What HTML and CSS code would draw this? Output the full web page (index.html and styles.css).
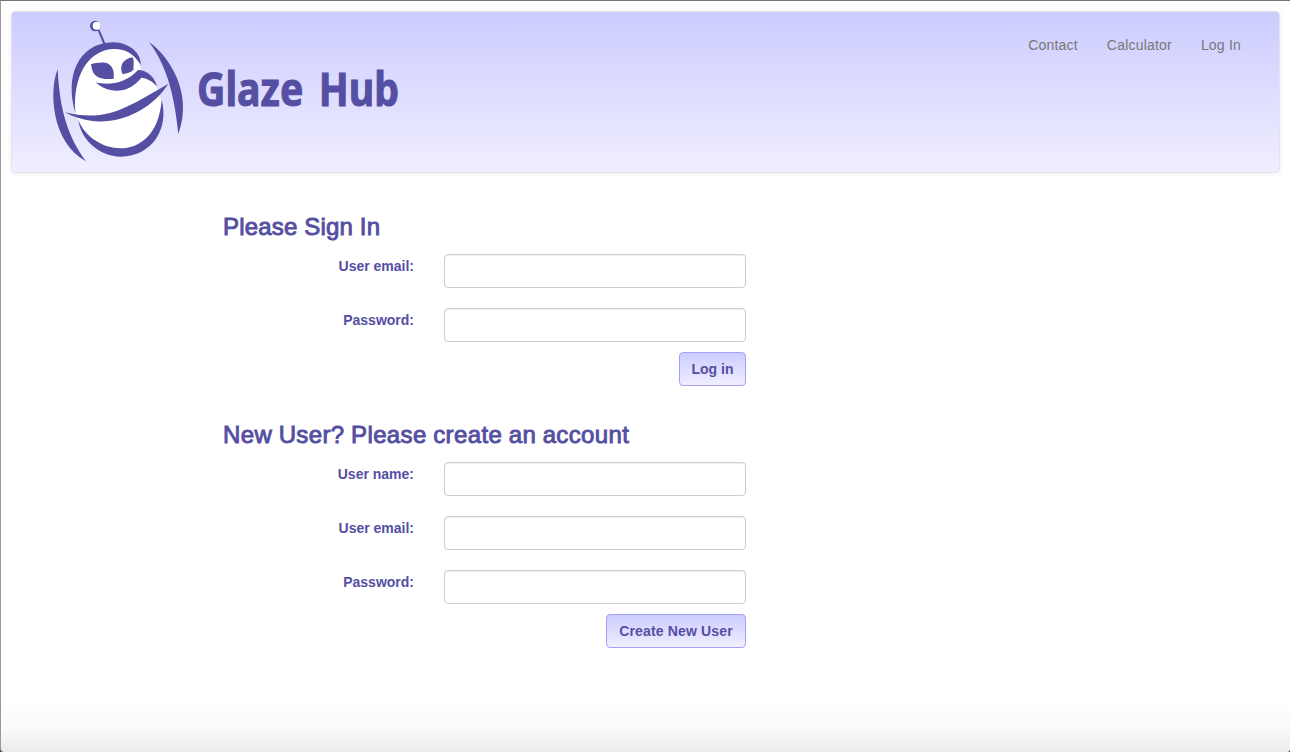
FILE: index.html
```html
<!DOCTYPE html>
<html lang="en">
<head>
<meta charset="utf-8">
<title>Glaze Hub</title>
<link rel="stylesheet" href="styles.css">
</head>
<body>
<div class="page">
  <header class="navbar">
    <a class="brand">
      <svg class="logo" viewBox="0 0 480 480" aria-hidden="true">
        <path class="white" d="M107 310C100 190 150 112 225 114C275 116 303 145 302 180C325 192 347 212 352 240L364 270C370 350 325 418 240 418C180 418 138 385 116 332Z"/>
        <path d="M106 308C74 203 112 98 221 97C270 98 305 132 302 165C281 128 252 115 218 117C143 122 97 201 106 308Z"/>
        <path d="M167 217C207 228 260 219 294 180C321 180 344 201 351 229C335 212 320 205 304 203C270 248 209 256 167 217Z"/>
        <path d="M153 163C167 158 193 155 204 161C218 168 223 182 221 206C202 209 181 207 169 198C157 189 155 175 153 163Z"/>
        <path d="M278 142C250 147 237 165 247 192C262 191 275 187 281 178C279 167 284 155 278 142Z"/>
        <path d="M75 307C202 338 262 291 385 221C326 316 187 370 75 307Z"/>
        <path d="M115 331C160 440 350 465 365 269C388 356 337 438 242 440C180 440 124 392 115 331Z"/>
        <path d="M53 178C27 239 33 398 138 454C84 381 59 302 53 178Z"/>
        <path d="M327 96C384 135 462 248 415 372C404 264 384 172 327 96Z"/>
        <path d="M173 61L179 60L198 104L191 105Z"/>
        <circle cx="166" cy="48" r="16"/>
        <circle class="white" cx="170" cy="47" r="12"/>
      </svg>
      <span class="title"><span>Glaze</span><span>Hub</span></span>
    </a>
    <nav class="links"><a>Contact</a><a>Calculator</a><a>Log In</a></nav>
  </header>
  <main class="content">
    <form class="panel">
      <h2 class="heading signin">Please Sign In</h2>
      <div class="row"><label for="a">User email:</label><input id="a" type="text"></div>
      <div class="row"><label for="b">Password:</label><input id="b" type="password"></div>
      <button type="button" class="btn">Log in</button>
    </form>
    <form class="panel">
      <h2 class="heading create">New User? Please create an account</h2>
      <div class="row"><label for="c">User name:</label><input id="c" type="text"></div>
      <div class="row"><label for="d">User email:</label><input id="d" type="text"></div>
      <div class="row"><label for="e">Password:</label><input id="e" type="password"></div>
      <button type="button" class="btn wide">Create New User</button>
    </form>
  </main>
</div>
</body>
</html>
```
FILE: styles.css
```css
* { box-sizing: border-box; }
body { margin: 0; background: #304668; font: 14px/20px "Liberation Sans", Arial, sans-serif; color: #544fa2; }
.page {
  height: 752px; padding: 10px;
  border-top: 1px solid #747474; border-left: 1px solid #999;
  border-radius: 0 0 3px 4px;
  background: linear-gradient(#fff 0, #fff 700px, #fafafa 726px, #ebebeb 752px);
}
.navbar {
  display: flex; justify-content: space-between;
  height: 162px; padding: 0 38px 0 28px;
  border: 1px solid #e3e3ee; border-radius: 4px;
  background: linear-gradient(#ccf, #f0eeff);
  box-shadow: 0 1px 5px rgba(0,0,0,.075);
}
.brand { display: flex; }
.logo { width: 160px; height: 160px; margin-top: -2px; fill: #544fa2; }
.logo .white { fill: #fff; }
.title {
  display: flex; gap: 18px; margin: 46px 0 0 -3px;
  font: bold 46px/60px "Noto Sans", sans-serif;
  -webkit-text-stroke: 1px #544fa2;
  transform: scaleX(.853); transform-origin: left;
}
.links { display: flex; gap: 29px; padding-top: 23px; color: #777; letter-spacing: .2px; }
.content { padding: 37px 0 0 212px; }
.panel { display: flex; flex-direction: column; width: 523px; margin-bottom: 32px; }
.heading { margin: 0 0 10px; font-size: 24px; line-height: 34px; font-weight: 400; white-space: nowrap; -webkit-text-stroke: .9px #544fa2; }
.signin { letter-spacing: .17px; }
.create { letter-spacing: .37px; word-spacing: -.5px; }
.row { display: flex; justify-content: flex-end; gap: 30px; height: 34px; margin-bottom: 20px; }
.row label { padding-top: 2px; font-weight: 700; }
.row input {
  width: 302px; height: 34px; padding: 6px 12px;
  border: 1px solid #ccc; border-radius: 4px; background: #fff;
  box-shadow: inset 0 1px 1px rgba(0,0,0,.075);
}
.btn {
  align-self: flex-end; width: 67px; height: 34px; margin-top: -10px; padding: 0;
  border: 1px solid #a5a0f8; border-radius: 4px;
  background: linear-gradient(#ccf, #f0eeff);
  color: #544fa2; font: bold 14px/20px "Liberation Sans", Arial, sans-serif;
}
.wide { width: 140px; letter-spacing: .15px; }
```
